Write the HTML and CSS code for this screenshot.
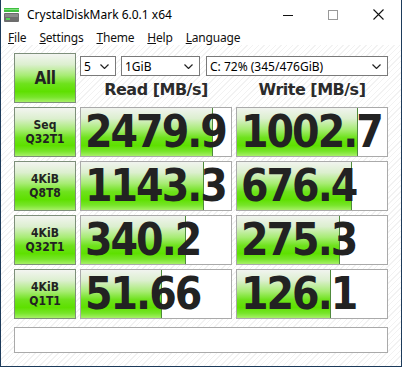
FILE: index.html
```html
<!DOCTYPE html>
<html lang="en">
<head>
    <meta charset="UTF-8">
    <title>CrystalDiskMark 6.0.1 x64</title>
    <link rel="stylesheet" href="styles.css">
</head>
<body>
    <div class="window">
        <div class="titlebar">
            <svg class="app-icon" width="15" height="14" viewBox="0 0 15 14">
                <rect x="0" y="0" width="15" height="4" fill="#3fbf3f"/>
                <rect x="0" y="1" width="15" height="1" fill="#7fe07f"/>
                <rect x="0" y="5" width="15" height="9" rx="1" fill="#6d6d6d"/>
                <rect x="1" y="6" width="13" height="3" fill="#8a8a8a"/>
                <rect x="2" y="10" width="4" height="2" fill="#56d656"/>
            </svg>
            <span class="title">CrystalDiskMark 6.0.1 x64</span>
            <div class="win-controls">
                <svg width="10" height="10" viewBox="0 0 10 10"><line x1="0" y1="5.5" x2="10" y2="5.5" stroke="#111" stroke-width="1"/></svg>
                <svg width="10" height="10" viewBox="0 0 10 10"><rect x="0.5" y="0.5" width="9" height="9" fill="none" stroke="#999" stroke-width="1"/></svg>
                <svg width="11" height="11" viewBox="0 0 11 11"><path d="M0.5 0.5 L10.5 10.5 M10.5 0.5 L0.5 10.5" stroke="#111" stroke-width="1.1"/></svg>
            </div>
        </div>
        <div class="menubar">
            <span><u>F</u>ile</span>
            <span><u>S</u>ettings</span>
            <span><u>T</u>heme</span>
            <span><u>H</u>elp</span>
            <span><u>L</u>anguage</span>
        </div>
        <div class="main">
            <div class="btn btn-all">All</div>
            <div class="head">
                <div class="selects">
                    <div class="select sel-count">5<svg width="9" height="5" viewBox="0 0 9 5"><polyline points="0.5,0.5 4.5,4.5 8.5,0.5" fill="none" stroke="#222" stroke-width="1.2"/></svg></div>
                    <div class="select sel-size">1GiB<svg width="9" height="5" viewBox="0 0 9 5"><polyline points="0.5,0.5 4.5,4.5 8.5,0.5" fill="none" stroke="#222" stroke-width="1.2"/></svg></div>
                    <div class="select sel-drive">C: 72% (345/476GiB)<svg width="9" height="5" viewBox="0 0 9 5"><polyline points="0.5,0.5 4.5,4.5 8.5,0.5" fill="none" stroke="#222" stroke-width="1.2"/></svg></div>
                </div>
                <div class="labels">
                    <div>Read [MB/s]</div>
                    <div>Write [MB/s]</div>
                </div>
            </div>

            <div class="btn">Seq<br>Q32T1</div>
            <div class="result"><div class="fill" style="width: 87%"></div><span>2479.9</span></div>
            <div class="result"><div class="fill" style="width: 80%"></div><span>1002.7</span></div>

            <div class="btn">4KiB<br>Q8T8</div>
            <div class="result"><div class="fill" style="width: 81%"></div><span>1143.3</span></div>
            <div class="result"><div class="fill" style="width: 76%"></div><span>676.4</span></div>

            <div class="btn">4KiB<br>Q32T1</div>
            <div class="result"><div class="fill" style="width: 69%"></div><span>340.2</span></div>
            <div class="result"><div class="fill" style="width: 68%"></div><span>275.3</span></div>

            <div class="btn">4KiB<br>Q1T1</div>
            <div class="result"><div class="fill" style="width: 53%"></div><span>51.66</span></div>
            <div class="result"><div class="fill" style="width: 62%"></div><span>126.1</span></div>

            <div class="status"></div>
        </div>
    </div>
</body>
</html>
```

FILE: styles.css
```css
body {
    margin: 0;
    font-family: "Noto Sans", "Open Sans", sans-serif;
    color: #111;
}
.window {
    width: 402px;
    height: 367px;
    box-sizing: border-box;
    border: 1px solid #1d3b5b;
    border-top: none;
    background-color: #fff;
    display: flex;
    flex-direction: column;
}
.titlebar {
    flex-shrink: 0;
    height: 29px;
    display: flex;
    align-items: center;
    padding-left: 3px;
    background-color: #fff;
}
.app-icon {
    margin-right: 8px;
}
.title {
    font-size: 12px;
    color: #000;
}
.win-controls {
    margin-left: auto;
    display: flex;
    align-items: center;
    gap: 35px;
    padding-right: 17px;
}
.menubar {
    flex-shrink: 0;
    height: 16px;
    display: flex;
    align-items: center;
    padding-left: 7px;
    font-size: 12px;
    letter-spacing: -0.2px;
    background-color: #fff;
}
.menubar span {
    margin-right: 13px;
}
.main {
    flex: 1;
    display: grid;
    grid-template-columns: 62px 152px 152px;
    grid-template-rows: repeat(5, 50px) 30px;
    gap: 4px;
    padding: 8px 0 0 13px;
    background: repeating-linear-gradient(-45deg, #fff 0, #fff 3px, #f2f2f2 3px, #f2f2f2 4px);
}
.btn {
    box-sizing: border-box;
    border: 1px solid #7d8f7a;
    background: linear-gradient(to bottom, #f3f5f1 0%, #dcefcf 22%, #a6ec72 45%, #6ee21c 62%, #5ee000 78%, #77e52a 90%, #a7f068 100%);
    display: flex;
    align-items: center;
    justify-content: center;
    text-align: center;
    font-family: "DejaVu Sans Condensed", "DejaVu Sans", sans-serif;
    font-stretch: condensed;
    font-weight: bold;
    font-size: 12px;
    line-height: 14px;
    color: #222;
}
.btn-all {
    font-size: 17px;
    letter-spacing: -0.5px;
}
.head {
    grid-column: span 2;
    display: flex;
    flex-direction: column;
}
.selects {
    display: flex;
    margin-top: 3px;
    height: 20px;
}
.select {
    box-sizing: border-box;
    height: 20px;
    border: 1px solid #7a7a7a;
    background-color: #fff;
    display: flex;
    align-items: center;
    justify-content: space-between;
    padding: 0 6px 0 3px;
    font-size: 12px;
    color: #000;
}
.sel-count {
    width: 36px;
}
.sel-size {
    width: 79px;
    margin-left: 5px;
}
.sel-drive {
    width: 182px;
    margin-left: 6px;
}
.labels {
    flex: 1;
    display: grid;
    grid-template-columns: 152px 152px;
    gap: 4px;
    align-items: center;
}
.labels div {
    text-align: center;
    font-family: "DejaVu Sans", sans-serif;
    font-weight: bold;
    font-size: 16px;
    letter-spacing: -0.5px;
    color: #2b2b2b;
}
.result {
    position: relative;
    box-sizing: border-box;
    border: 1px solid #aaa;
    background-color: #fff;
    display: flex;
    align-items: center;
    padding-left: 4px;
    overflow: hidden;
}
.fill {
    position: absolute;
    top: 0;
    bottom: 0;
    left: 0;
    border-right: 1px solid #4f8a3c;
    background: linear-gradient(to bottom, #f1f4ef 0%, #dcefcf 22%, #a6ec72 45%, #6ee21c 62%, #5ee000 78%, #77e52a 90%, #a7f068 100%);
}
.result span {
    position: relative;
    font-family: "DejaVu Sans Condensed", "DejaVu Sans", sans-serif;
    font-stretch: condensed;
    font-weight: bold;
    font-size: 44px;
    letter-spacing: -2px;
    color: #222;
    line-height: 1;
}
.status {
    grid-column: 1 / -1;
    margin-top: 4px;
    box-sizing: border-box;
    border: 1px solid #aaa;
    background-color: #fff;
}
```
